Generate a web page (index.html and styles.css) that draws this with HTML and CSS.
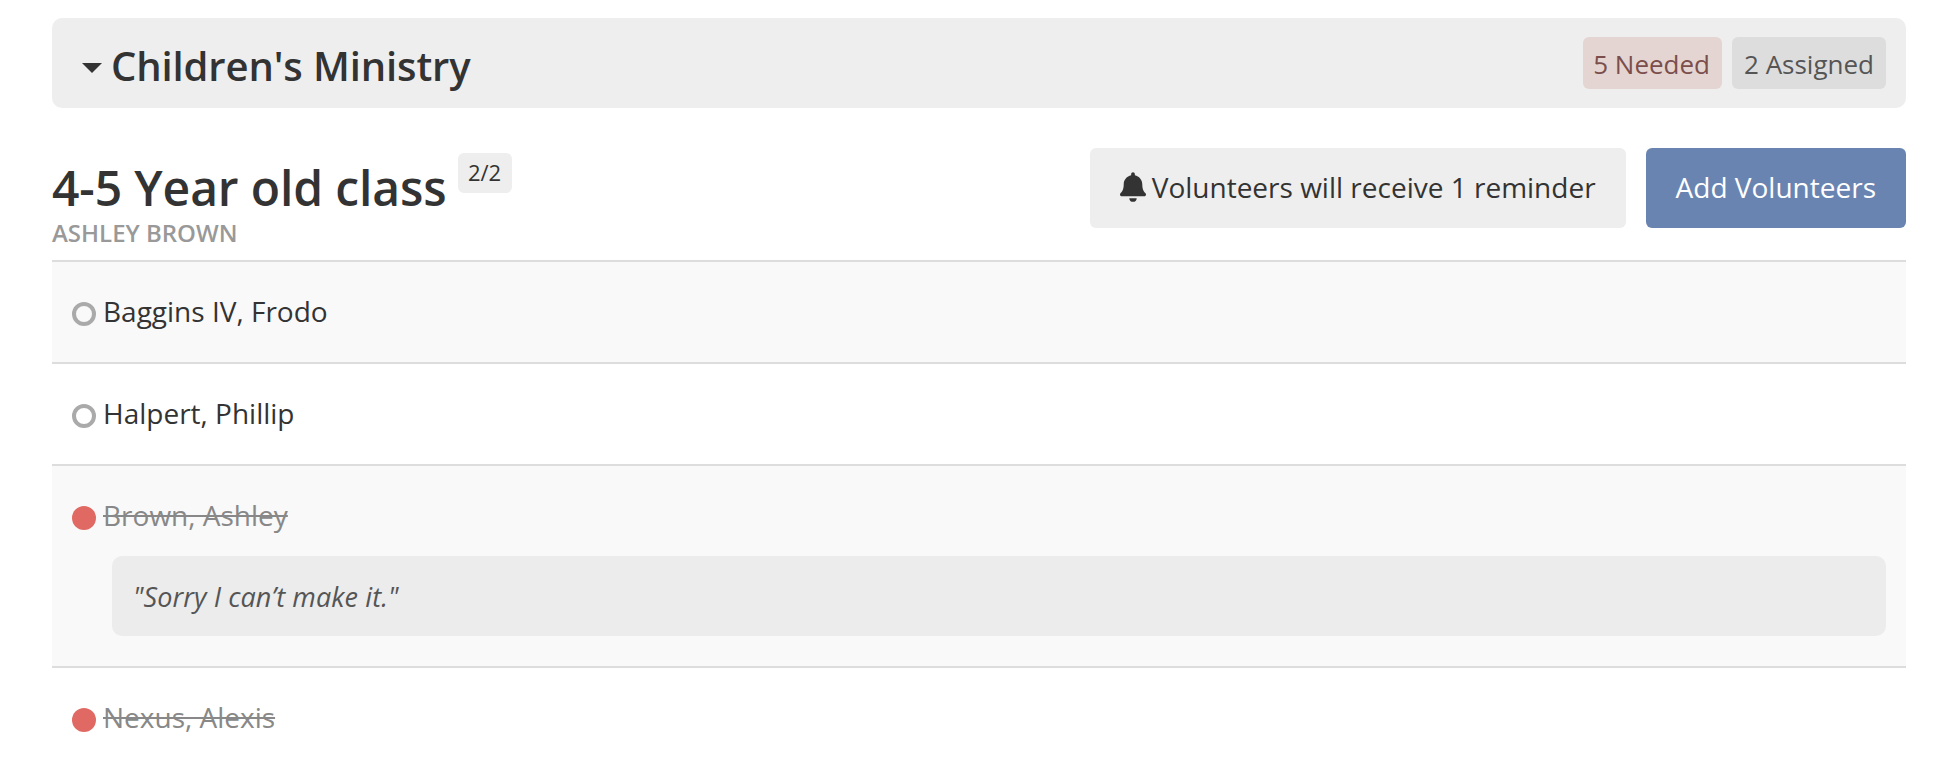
FILE: index.html
```html
<!DOCTYPE html>
<html lang="en">
<head>
<meta charset="utf-8">
<title>Children's Ministry</title>
<link rel="stylesheet" href="styles.css">
</head>
<body>
<main class="page">
  <header class="group">
    <h2 class="group-title"><span class="caret"></span>Children's Ministry</h2>
    <div class="group-tags">
      <span class="tag tag-needed">5 Needed</span>
      <span class="tag tag-assigned">2 Assigned</span>
    </div>
  </header>
  <section class="slot">
    <div class="slot-info">
      <div class="slot-head">
        <h1 class="slot-title">4-5 Year old class</h1>
        <span class="count">2/2</span>
      </div>
      <div class="slot-lead">ASHLEY BROWN</div>
    </div>
    <div class="slot-actions">
      <div class="reminder">
        <svg class="bell" viewBox="0 0 448 512"><path d="M224 512c35.300 0 64-28.700 64-64H160c0 35.300 28.700 64 64 64zm215.400-149.700c-19.300-20.800-55.500-52-55.500-154.300 0-77.700-54.500-139.900-127.900-155.200V32c0-17.700-14.300-32-32-32s-32 14.300-32 32v20.800C118.600 68.100 64.100 130.300 64.100 208c0 102.300-36.200 133.500-55.500 154.300-6 6.400-8.700 14.100-8.600 21.700.1 16.400 13 32 32.100 32h383.800c19.100 0 32-15.600 32.100-32 .1-7.600-2.600-15.300-8.600-21.700z"/></svg>
        Volunteers will receive 1 reminder
      </div>
      <button class="add-btn" type="button">Add Volunteers</button>
    </div>
  </section>
  <ul class="people">
    <li class="person shaded"><div class="person-line"><span class="dot"></span><span class="name">Baggins IV, Frodo</span></div></li>
    <li class="person"><div class="person-line"><span class="dot"></span><span class="name">Halpert, Phillip</span></div></li>
    <li class="person shaded declined">
      <div class="person-line"><span class="dot"></span><span class="name">Brown, Ashley</span></div>
      <div class="note">"Sorry I can’t make it."</div>
    </li>
    <li class="person declined"><div class="person-line"><span class="dot"></span><span class="name">Nexus, Alexis</span></div></li>
  </ul>
</main>
</body>
</html>
```

FILE: styles.css
```css
* { box-sizing: border-box; }
html, body { margin: 0; background: #fff; }
body { font-family: "Open Sans", sans-serif; color: #333; overflow: hidden; height: 774px; }
.page { padding: 18px 50px 0 52px; }
.group {
  height: 90px;
  background: #eee;
  border-radius: 10px;
  padding: 0 20px 0 30px;
  display: flex;
  align-items: center;
  justify-content: space-between;
}
.group-title { margin: 6px 0 0; font-size: 40px; font-weight: 600; line-height: 50px; letter-spacing: -0.12px; display: flex; align-items: center; }
.caret {
  width: 0; height: 0; margin-right: 9px; margin-top: 3px;
  border-left: 10px solid transparent;
  border-right: 10px solid transparent;
  border-top: 10px solid #333;
}
.group-tags { display: flex; gap: 10px; }
.tag { height: 52px; padding: 2px 11px 0; border-radius: 6px; font-size: 26px; display: flex; align-items: center; }
.tag-needed { background: #e5d5d2; color: #7b4e4c; padding-right: 12px; padding-left: 10px; }
.tag-assigned { background: #ddd; color: #555; padding: 2px 12px 0; }
.slot { display: flex; justify-content: space-between; height: 152px; padding-top: 40px; }
.slot-head { display: flex; align-items: flex-start; gap: 11px; }
.slot-title { margin: 12px 0 0; font-size: 48px; font-weight: 600; line-height: 56px; letter-spacing: -0.12px; }
.count {
  height: 40px; width: 54px; margin-top: 5px; border-radius: 6px;
  background: #eee; font-size: 22px; line-height: 38px; text-align: center;
}
.slot-lead { font-size: 24px; font-weight: 600; color: #999; line-height: 28px; margin-top: 3px; }
.slot-actions { display: flex; gap: 20px; }
.reminder, .add-btn { height: 80px; border-radius: 6px; font-size: 28px; display: flex; align-items: center; font-family: inherit; border: 0; padding-bottom: 2px; }
.reminder { background: #eee; padding-left: 30px; padding-right: 30px; gap: 6px; }
.bell { width: 26px; height: 30px; fill: #333; }
.add-btn { background: #6a84b2; color: #fff; padding-left: 30px; padding-right: 30px; padding-bottom: 4px; }
.people { list-style: none; margin: 0; padding: 0; }
.person { border-top: 2px solid #ddd; padding: 24px 20px 0; min-height: 102px; }
.person.shaded { background: #f9f9f9; }
.person:has(.note) { padding-bottom: 30px; }
.person-line { display: flex; align-items: center; height: 50px; font-size: 28px; color: #333; gap: 7px; }
.dot { width: 24px; height: 24px; border-radius: 50%; border: 4px solid #aaa; flex: none; margin-top: 5px; }
.declined .dot { background: #e06a63; border: 0; }
.declined .name { color: #888; text-decoration: line-through; }
.note {
  margin: 16px 0 0 40px;
  height: 80px; border-radius: 10px;
  background: #ececec; color: #555;
  font-style: italic; font-size: 27px; letter-spacing: 0.1px;
  padding: 0 21px; display: flex; align-items: center;
}
```
